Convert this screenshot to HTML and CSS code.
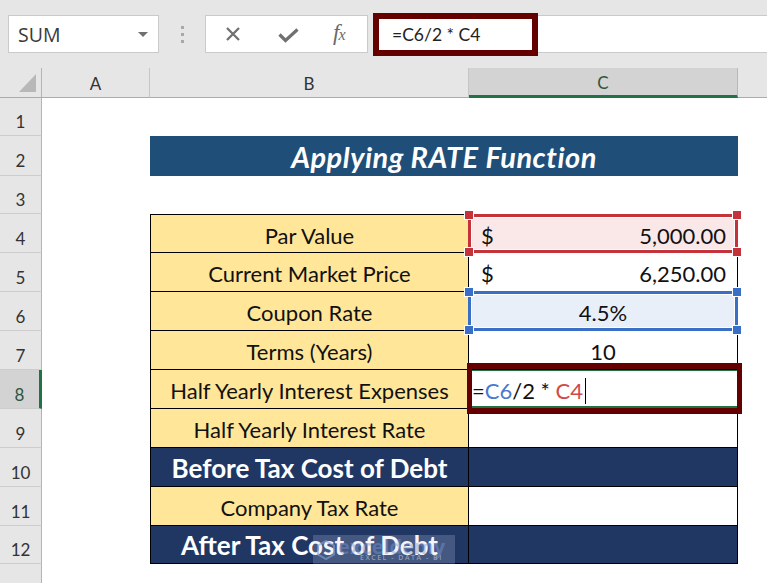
FILE: index.html
```html
<!DOCTYPE html>
<html>
<head>
<meta charset="utf-8">
<link rel="stylesheet" href="styles.css">
</head>
<body>
<div class="toolbar">
  <div class="namebox"><span class="name">SUM</span><span class="caret"></span></div>
  <div class="grip"><i></i><i></i><i></i></div>
  <div class="fxbtns">
    <svg class="ic-x" width="16" height="16" viewBox="0 0 16 16"><path d="M2 2 L14 14 M14 2 L2 14" stroke="#707070" stroke-width="2.3" fill="none"/></svg>
    <svg class="ic-ok" width="21" height="15" viewBox="0 0 21 15"><path d="M1.5 6.5 L7.5 12.5 L19.5 1.5" stroke="#707070" stroke-width="3.2" fill="none"/></svg>
    <span class="fx">f<span class="fx-x">x</span></span>
  </div>
  <div class="formula">
    <span class="ftext">=C6/2 * C4</span>
    <div class="formula-hl"></div>
  </div>
</div>

<div class="sheet">
  <div class="corner"></div>
  <div class="ch">A</div>
  <div class="ch">B</div>
  <div class="ch sel">C</div>
  <div class="ch rest"></div>

  <div class="rh">1</div><div class="c"></div><div class="c"></div><div class="c"></div><div class="c"></div>

  <div class="rh">2</div><div class="c"></div><div class="title">Applying RATE Function</div><div class="c"></div>

  <div class="rh">3</div><div class="c"></div><div class="c"></div><div class="c"></div><div class="c"></div>

  <div class="rh">4</div><div class="c"></div>
  <div class="lbl top">Par Value</div>
  <div class="val top money ref red"><span>$</span><span>5,000.00</span><i class="h tl"></i><i class="h tr"></i><i class="h bl"></i><i class="h br"></i></div>
  <div class="c"></div>

  <div class="rh">5</div><div class="c"></div>
  <div class="lbl">Current Market Price</div>
  <div class="val money"><span>$</span><span>6,250.00</span></div>
  <div class="c"></div>

  <div class="rh">6</div><div class="c"></div>
  <div class="lbl">Coupon Rate</div>
  <div class="val center ref blue">4.5%<i class="h tl"></i><i class="h tr"></i><i class="h bl"></i><i class="h br"></i></div>
  <div class="c"></div>

  <div class="rh">7</div><div class="c"></div>
  <div class="lbl">Terms (Years)</div>
  <div class="val center">10</div>
  <div class="c"></div>

  <div class="rh sel">8</div><div class="c"></div>
  <div class="lbl">Half Yearly Interest Expenses</div>
  <div class="val edit"><span class="etext"><span class="k">=</span><span class="rb">C6</span><span class="k">/2 * </span><span class="rr">C4</span></span><span class="cursor"></span><div class="edit-hl"></div></div>
  <div class="c"></div>

  <div class="rh">9</div><div class="c"></div>
  <div class="lbl">Half Yearly Interest Rate</div>
  <div class="val"></div>
  <div class="c"></div>

  <div class="rh">10</div><div class="c"></div>
  <div class="lbl dark">Before Tax Cost of Debt</div>
  <div class="val dark"></div>
  <div class="c"></div>

  <div class="rh">11</div><div class="c"></div>
  <div class="lbl">Company Tax Rate</div>
  <div class="val"></div>
  <div class="c"></div>

  <div class="rh">12</div><div class="c"></div>
  <div class="lbl dark wmhost">After Tax Cost of Debt
    <div class="wm">
      <svg class="wm-logo" width="18" height="20" viewBox="0 0 18 20"><path d="M9 1 L17 5.5 L17 14.5 L9 19 L1 14.5 L1 5.5 Z" fill="none" stroke="rgba(140,165,215,0.6)" stroke-width="2"/></svg>
      <div class="wm-text"><span class="wm-big">exceldemy</span><span class="wm-small">EXCEL - DATA - BI</span></div>
    </div>
  </div>
  <div class="val dark"></div>
  <div class="c"></div>

  <div class="rh last"></div><div class="c"></div><div class="c"></div><div class="c"></div><div class="c"></div>
</div>
</body>
</html>
```

FILE: styles.css
```css
* { box-sizing: border-box; }
html, body { margin: 0; padding: 0; }
body {
  width: 767px;
  height: 583px;
  overflow: hidden;
  background: #fff;
  font-family: Lato, "Liberation Sans", sans-serif;
}

/* ---------- toolbar ---------- */
.toolbar {
  height: 68px;
  background: #e6e6e6;
  display: flex;
  align-items: flex-start;
  padding: 15px 0 0 8px;
}
.namebox {
  width: 151px;
  height: 38px;
  background: #fff;
  border: 1px solid #cacaca;
  display: flex;
  align-items: center;
  justify-content: space-between;
  padding: 0 10px 0 9px;
}
.name {
  font-family: "Open Sans", sans-serif;
  font-size: 19.5px;
  color: #3a3a3a;
}
.caret {
  width: 0; height: 0;
  border-left: 5px solid transparent;
  border-right: 5px solid transparent;
  border-top: 5px solid #707070;
}
.grip {
  width: 46px;
  height: 38px;
  display: flex;
  flex-direction: column;
  align-items: center;
  justify-content: center;
  gap: 4px;
}
.grip i { display: block; width: 3px; height: 3px; background: #a8a8a8; }
.fxbtns {
  width: 163px;
  height: 38px;
  background: #fff;
  border: 1px solid #cacaca;
  display: flex;
  align-items: center;
  padding-left: 19px;
}
.ic-ok { margin-left: 37px; margin-top: 2px; }
.fx {
  margin-left: 34px;
  font-family: "Liberation Serif", serif;
  font-style: italic;
  font-size: 23px;
  color: #6a6a6a;
  letter-spacing: -1px;
  margin-top: -3px;
}
.fx-x { font-size: 16px; }
.formula {
  flex: 1;
  margin-left: 5px;
  height: 38px;
  background: #fff;
  border: 1px solid #cacaca;
  border-right: 0;
  position: relative;
  display: flex;
  align-items: center;
  padding-left: 18px;
}
.ftext { font-size: 17.5px; color: #222; }
.formula-hl {
  position: absolute;
  left: -1px;
  top: -3px;
  width: 165px;
  height: 43px;
  border: 6px solid #640000;
}

/* ---------- sheet ---------- */
.sheet {
  display: grid;
  grid-template-columns: 42px 108px 319px 269px 29px;
  grid-template-rows: 30px 38px 40px 38px repeat(8, 39px) 38px 19px;
}
.corner {
  background: #e6e6e6;
  border-right: 1px solid #b4b4b4;
  border-bottom: 1px solid #ababab;
  position: relative;
}
.corner::after {
  content: "";
  position: absolute;
  right: 5px;
  bottom: 5px;
  width: 17px;
  height: 18px;
  background: #b8b8b8;
  clip-path: polygon(100% 0, 100% 100%, 0 100%);
}
.ch {
  background: #e6e6e6;
  border-right: 1px solid #c6c6c6;
  border-bottom: 1px solid #ababab;
  display: flex;
  align-items: center;
  justify-content: center;
  padding-top: 2px;
  font-size: 17px;
  color: #333;
}
.ch.sel {
  background: #d3d3d3;
  border-bottom: 3px solid #217346;
  border-right: 1px solid #b8b8b8;
  color: #2d5540;
}
.ch.rest { border-right: 0; }

.rh {
  background: #e6e6e6;
  border-right: 1px solid #b4b4b4;
  border-bottom: 1px solid #cdcdcd;
  display: flex;
  align-items: center;
  justify-content: center;
  padding-top: 10px;
  font-size: 17px;
  color: #333;
}
.rh.sel {
  background: #d3d3d3;
  border-right: 3px solid #217346;
  color: #2d5540;
}
.rh.last { border-bottom: 0; }

.c { background: #fff; }

.title {
  grid-column: span 2;
  background: #1f4e78;
  color: #fff;
  font-weight: 700;
  font-style: italic;
  font-size: 29px;
  letter-spacing: 0.5px;
  display: flex;
  align-items: center;
  justify-content: center;
}

.lbl {
  background: #ffe699;
  border-left: 1px solid #000;
  border-right: 1px solid #000;
  border-bottom: 1px solid #000;
  display: flex;
  align-items: center;
  justify-content: center;
  padding-top: 3px;
  font-size: 22px;
  color: #111;
  white-space: nowrap;
}
.val {
  background: #fff;
  border-right: 1px solid #000;
  border-bottom: 1px solid #000;
  display: flex;
  align-items: center;
  padding-top: 3px;
  font-size: 22px;
  color: #111;
}
.top { border-top: 1px solid #000; }
.money { justify-content: space-between; padding-left: 12px; padding-right: 11px; }
.center { justify-content: center; }

.dark {
  background: #203764;
  color: #fff;
  font-weight: 700;
  font-size: 26px;
  padding-top: 1px;
}

/* reference highlight frames */
.ref { position: relative; }
.ref::before {
  content: "";
  position: absolute;
  left: -1px; top: -1px; right: -1px; bottom: -1px;
  border: 3px solid var(--rc);
  box-shadow: inset 0 0 0 1px #fff;
}
.ref.red { --rc: #c4323a; background: #fae8e8; }
.ref.blue { --rc: #3a6fc8; background: #e9eff9; }
.h {
  position: absolute;
  width: 8px;
  height: 8px;
  background: var(--rc);
  outline: 1px solid #fff;
}
.h.tl { left: -4px; top: -4px; }
.h.tr { right: -4px; top: -4px; }
.h.bl { left: -4px; bottom: -4px; }
.h.br { right: -4px; bottom: -4px; }

/* editing cell */
.edit {
  position: relative;
  padding-left: 3px;
  box-shadow: inset 0 1px 0 #217346, inset 0 -2px 0 #217346;
}
.etext { white-space: pre; }
.edit .k { color: #111; }
.edit .rb { color: #4a78d0; }
.edit .rr { color: #d04a4a; }
.cursor {
  display: inline-block;
  width: 1px;
  height: 26px;
  background: #000;
  margin-left: 2px;
}
.edit-hl {
  position: absolute;
  left: -2px;
  right: -5px;
  top: -7px;
  bottom: -6px;
  border-style: solid;
  border-color: #640000;
  border-width: 6px 5px;
}

/* watermark */
.wmhost { position: relative; }
.wm {
  position: absolute;
  left: 162px;
  top: 9px;
  width: 142px;
  height: 29px;
  background: rgba(200, 210, 235, 0.22);
  display: flex;
  align-items: center;
  padding-left: 4px;
  gap: 3px;
}
.wm-text { display: flex; flex-direction: column; line-height: 1; }
.wm-big {
  font-family: "Open Sans", sans-serif;
  font-size: 20px;
  font-weight: 700;
  color: rgba(120, 150, 215, 0.45);
  margin-top: -2px;
}
.wm-small {
  font-family: "Open Sans", sans-serif;
  font-size: 7px;
  font-weight: 600;
  letter-spacing: 1.5px;
  color: rgba(170, 180, 205, 0.75);
  margin-left: 22px;
  margin-top: -3px;
}
```
